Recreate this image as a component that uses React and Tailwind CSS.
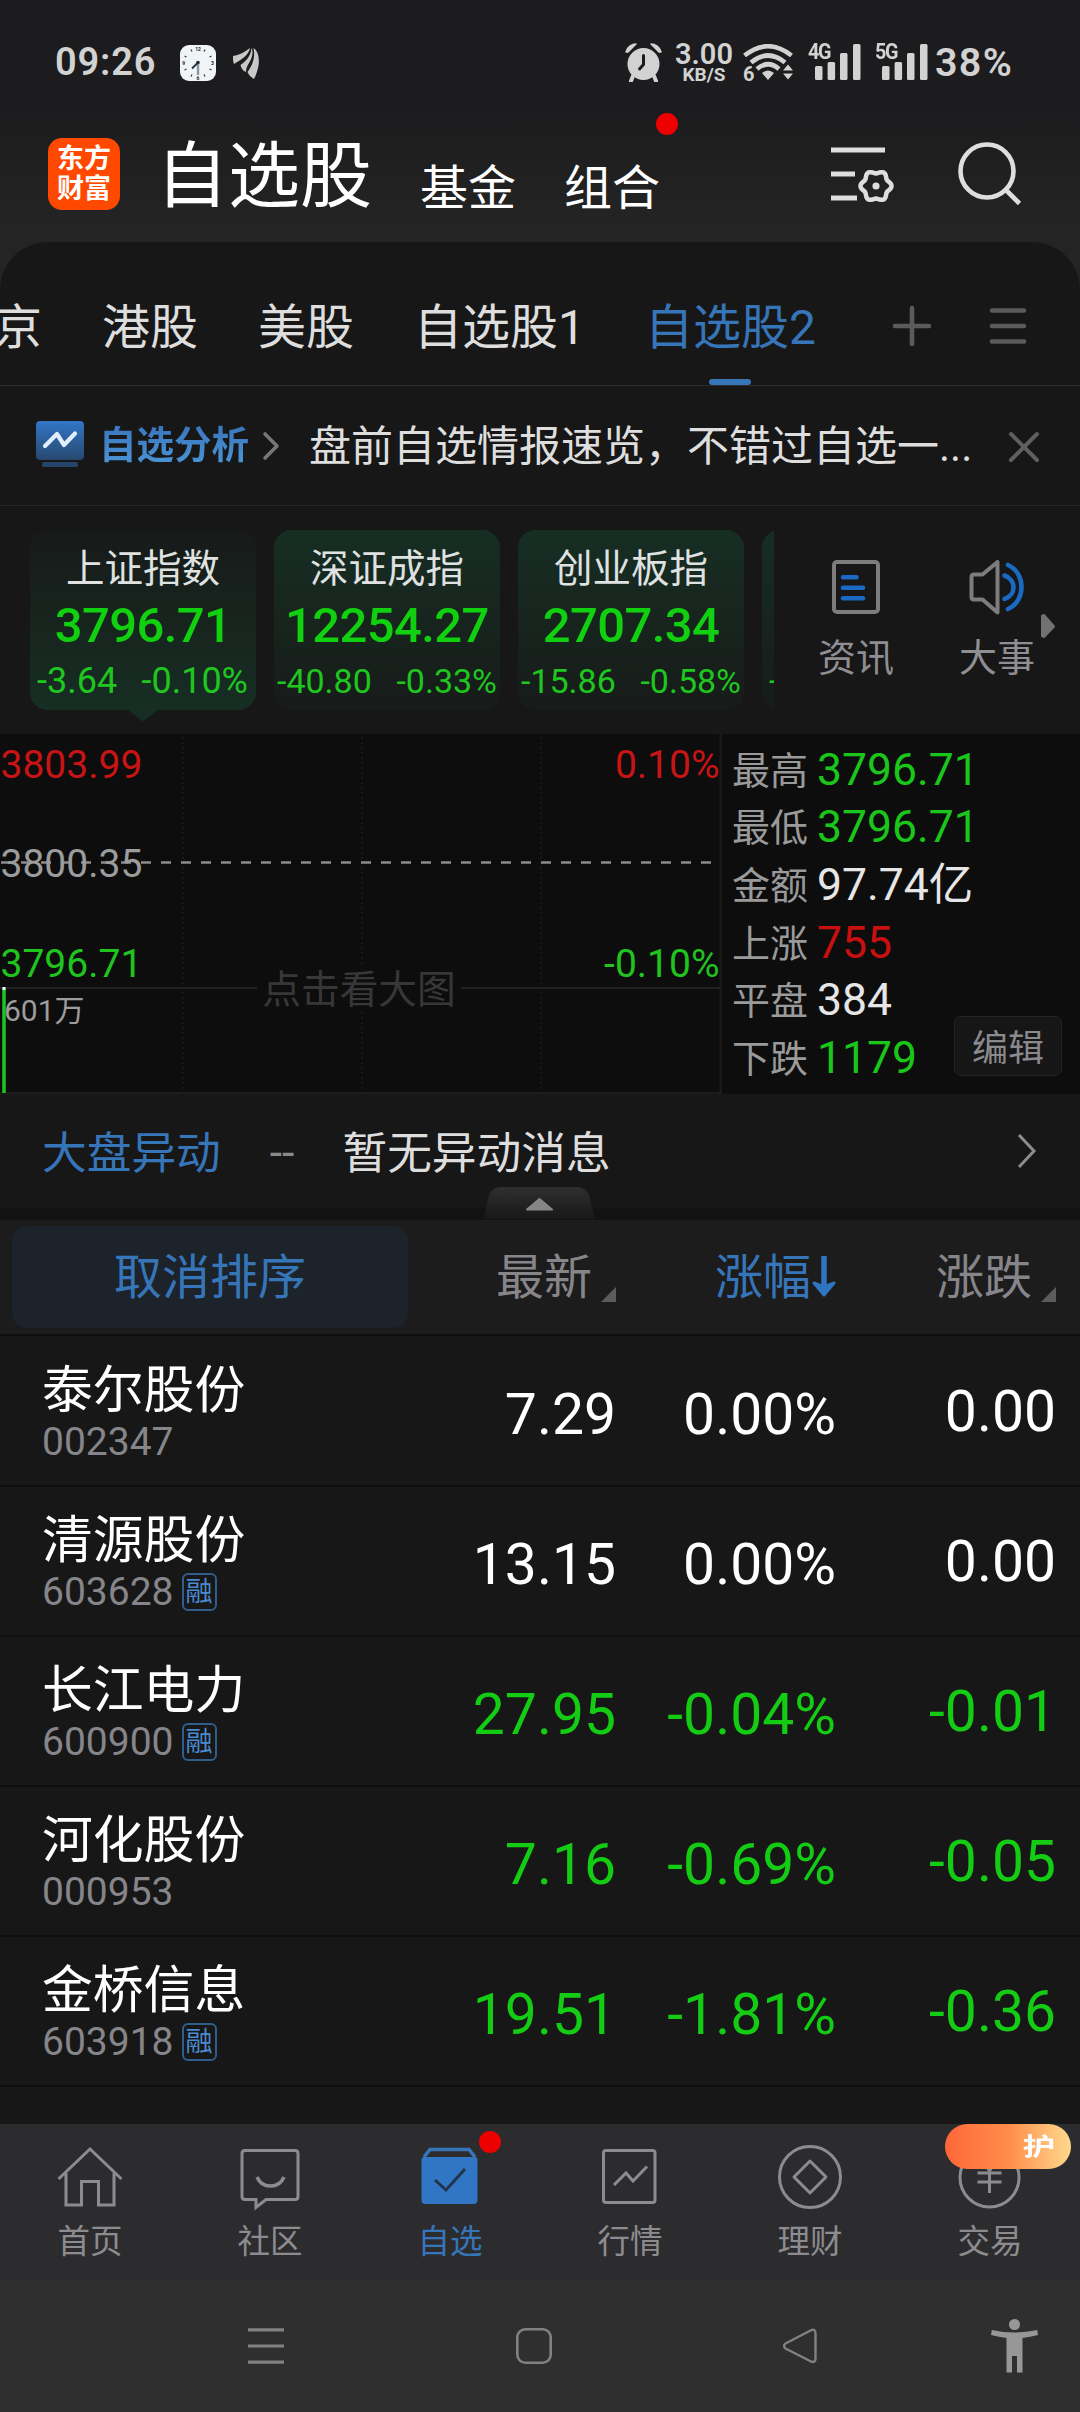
import React, { useState } from 'react';

const tabs = ['京', '港股', '美股', '自选股1', '自选股2'];

const indexes = [
  { name: '上证指数', value: '3796.71', diff: '-3.64', rate: '-0.10%' },
  { name: '深证成指', value: '12254.27', diff: '-40.80', rate: '-0.33%' },
  { name: '创业板指', value: '2707.34', diff: '-15.86', rate: '-0.58%' },
];

const stats = [
  { label: '最高', value: '3796.71', color: 'text-[#1bc61b]' },
  { label: '最低', value: '3796.71', color: 'text-[#1bc61b]' },
  { label: '金额', value: '97.74亿', color: 'text-[#e6e6e6]' },
  { label: '上涨', value: '755', color: 'text-[#c81010]' },
  { label: '平盘', value: '384', color: 'text-[#e6e6e6]' },
  { label: '下跌', value: '1179', color: 'text-[#1bc61b]' },
];

const stocks = [
  { name: '泰尔股份', code: '002347', margin: false, price: '7.29', rate: '0.00%', diff: '0.00' },
  { name: '清源股份', code: '603628', margin: true, price: '13.15', rate: '0.00%', diff: '0.00' },
  { name: '长江电力', code: '600900', margin: true, price: '27.95', rate: '-0.04%', diff: '-0.01' },
  { name: '河化股份', code: '000953', margin: false, price: '7.16', rate: '-0.69%', diff: '-0.05' },
  { name: '金桥信息', code: '603918', margin: true, price: '19.51', rate: '-1.81%', diff: '-0.36' },
];

// Six-lobed gear outline for the settings icon
const gearPoints = Array.from({ length: 72 }, (_, i) => {
  const a = (i * Math.PI) / 36;
  const r = 14 + 1.5 * Math.cos(6 * a);
  return `${(45 + r * Math.cos(a)).toFixed(2)},${(40 + r * Math.sin(a)).toFixed(2)}`;
}).join(' ');

/* --- STATUS BAR --- */
function SignalBars() {
  return (
    <svg className="w-[46px] h-9" viewBox="0 0 46 36" fill="#d2d2d2">
      <rect x="0" y="22" width="7.5" height="14" rx="1.5" />
      <rect x="12.6" y="18" width="7.5" height="18" rx="1.5" />
      <rect x="25" y="9" width="7.5" height="27" rx="1.5" />
      <rect x="38" y="0" width="7.5" height="36" rx="1.5" />
    </svg>
  );
}

function Signal({ label }) {
  return (
    <div className="relative pl-[6px] h-9">
      <span className="absolute -left-px -top-px text-[22px] leading-[18px] font-bold tracking-[-1.5px] scale-x-90 origin-left">{label}</span>
      <SignalBars />
    </div>
  );
}

function StatusBar() {
  return (
    <div className="h-[124px] pt-[44px] pl-[55px] pr-[60px] flex items-start text-[#d2d2d2]">
      <span className="w-[101px] text-[38px] leading-9 font-semibold tracking-[0.8px]">09:26</span>
      <svg className="ml-[24px] mt-px w-9 h-9" viewBox="0 0 36 36">
        <rect width="36" height="36" rx="9" fill="#f1f4f7" />
        <g stroke="#333" strokeWidth="1.2">
          <path d="M11 4.5l1 2M25 4.5l-1 2M4.5 11l2 1M31.5 11l-2 1M4.5 25l2-1M31.5 25l-2-1M11 31.5l1-2M25 31.5l-1-2" />
        </g>
        <g fill="#222" fontSize="5" fontWeight="700" textAnchor="middle">
          <text x="18" y="6">12</text>
          <text x="32.5" y="20">3</text>
          <text x="18" y="35">6</text>
          <text x="3.8" y="20">9</text>
        </g>
        <path d="M18 17.5V30" stroke="#8797a8" strokeWidth="2.4" />
        <path d="M18 17.5l-6 6" stroke="#222f3c" strokeWidth="1.8" />
        <circle cx="18" cy="17.5" r="1.8" fill="#222f3c" />
      </svg>
      <svg className="ml-[17px] mt-1 w-[26px] h-[31px]" viewBox="0 0 26 31" fill="#c8c8c8">
        <path d="M0 8C6 7 12 4 17 0c-1 6-7 11-16 16C0 14 0 11 0 8z" />
        <path d="M18.500 0c2 3 1 10-2.500 15-2 3-3 6-3 9-3-1-5-4-5.500-7C13 13 18 8 18.500 0z" />
        <path d="M20.500 0c6 4 6 14 4.500 20-1 4-2 7-4 11-3-2-5.500-4-6.500-7 5-7 8-15 6-24z" />
      </svg>

      <svg className="ml-auto -mt-px w-[38px] h-[39px]" viewBox="0 0 38 39">
        <circle cx="18.5" cy="21" r="16" fill="#d2d2d2" />
        <path d="M8 33l-2 5M29 33l2 5" stroke="#d2d2d2" strokeWidth="4" strokeLinecap="round" />
        <path d="M1 9C2 4 7 1 11 1L3 9zM36 9C35 4 30 1 26 1l8 8z" fill="#d2d2d2" stroke="#d2d2d2" strokeWidth="1.5" strokeLinejoin="round" />
        <path d="M18.500 12.500v9l-4 4.500" fill="none" stroke="#1c1c1e" strokeWidth="3" strokeLinecap="round" strokeLinejoin="round" />
      </svg>
      <div className="ml-[11px] w-[60px] flex flex-col items-center">
        <span className="text-[29px] leading-[20px] font-semibold">3.00</span>
        <span className="mt-[4px] text-[19px] leading-[14px] font-bold">KB/S</span>
      </div>
      <svg className="ml-[9px] w-[52px] h-[38px]" viewBox="0 0 52 38">
        <g fill="none" stroke="#d2d2d2" strokeWidth="4.6">
          <path d="M1.500 11.500Q25 -7 48.500 11.500" />
          <path d="M8 18.500Q25 4.500 42 18.500" />
          <path d="M14 25Q25 15.500 36 25" />
        </g>
        <path d="M19 29q6-5 12 0l-6 7z" fill="#d2d2d2" />
        <path d="M40 26.500l5-6 5 6zM40 29.500l5 6 5-6z" fill="#d2d2d2" />
        <text x="0" y="36.500" fontSize="20" fontWeight="700" fill="#d2d2d2">6</text>
      </svg>
      <div className="ml-[14px]"><Signal label="4G" /></div>
      <div className="ml-[15px]"><Signal label="5G" /></div>
      <span className="ml-[7px] w-[85px] text-[39.500px] leading-[38px] font-semibold tracking-[1.3px]">38%</span>
    </div>
  );
}

/* --- TOP HEADER --- */
function Header() {
  return (
    <header className="h-[118px] pl-12 flex items-start text-white">
      <div className="mt-[14px] w-[72px] h-[72px] rounded-[14px] bg-[#ff4800] flex flex-col items-center justify-center text-[27px] leading-[30px] font-bold">
        <span>东方</span>
        <span>财富</span>
      </div>
      <h1 className="ml-[36px] mt-[15px] text-[72px] leading-[76px]">自选股</h1>
      <span className="ml-[48px] mt-[40px] text-[48px] leading-[50px]">基金</span>
      <div className="relative ml-[48px] mt-[40px] text-[48px] leading-[50px]">
        组合
        <span className="absolute left-[92px] -top-[51px] w-[22px] h-[22px] rounded-full bg-[#ee0000]" />
      </div>
      <svg className="ml-[171px] mt-[22px] w-[64px] h-[58px]" viewBox="0 0 64 58" fill="none" stroke="#dedede">
        <path d="M0 4h54M0 28h24M0 52h26" strokeWidth="5" />
        <polygon points={gearPoints} strokeWidth="4.500" />
        <circle cx="45" cy="40" r="3.600" fill="#dedede" stroke="none" />
      </svg>
      <svg className="ml-[63px] mt-[17px] w-[64px] h-[66px]" viewBox="0 0 64 66" fill="none" stroke="#dedede" strokeWidth="4.600">
        <circle cx="29" cy="30" r="26.500" />
        <path d="M48 49l13.500 13.500" />
      </svg>
    </header>
  );
}

function GroupTabs({ active, onChange }) {
  return (
    <div className="h-[144px] border-b border-[#2d2d2d] flex items-center overflow-hidden text-[48px] leading-[60px] text-[#dedede]">
      <div className="-ml-[6px] flex gap-[60px] h-full items-center pt-[29px] whitespace-nowrap">
        {tabs.map((tab) => (
          <button
            key={tab}
            onClick={() => onChange(tab)}
            className={tab === active ? 'relative h-full text-[#3775b9]' : 'h-full'}
          >
            {tab}
            {tab === active && <span className="absolute bottom-0 left-[64px] w-[42px] h-[6px] rounded-full bg-[#3775b9]" />}
          </button>
        ))}
      </div>
      <svg className="ml-[76px] mt-[24px] w-[40px] h-[42px] shrink-0" viewBox="0 0 40 42" stroke="#5b5b5b" strokeWidth="4.600" strokeLinecap="round">
        <path d="M3 21h34M20 3v36" />
      </svg>
      <svg className="ml-[57px] mt-[24px] w-[40px] h-[42px] shrink-0" viewBox="0 0 40 42" stroke="#5b5b5b" strokeWidth="4.600" strokeLinecap="round">
        <path d="M3 5.500h32M3 21h32M3 36.500h32" />
      </svg>
    </div>
  );
}

function AnalysisBanner() {
  return (
    <div className="h-[120px] pl-9 border-b border-[#262626] flex items-center">
      <svg className="-mt-[4px] w-12 h-[46px]" viewBox="0 0 48 46">
        <defs>
          <linearGradient id="board" x1="0" y1="0" x2="0" y2="1">
            <stop offset="0" stopColor="#3176c6" />
            <stop offset="1" stopColor="#28486f" />
          </linearGradient>
        </defs>
        <rect width="48" height="39" rx="4" fill="url(#board)" />
        <path d="M9 25l12-12 7 11L39 12.500" fill="none" stroke="#e2eefb" strokeWidth="4.200" strokeLinecap="round" strokeLinejoin="round" />
        <rect x="6" y="41" width="36" height="5" rx="2" fill="#27456b" />
      </svg>
      <span className="ml-[15px] -mt-px text-[37.500px] leading-[44px] font-bold bg-linear-to-b from-[#3a74bd] to-[#4b96d6] bg-clip-text text-transparent">自选分析</span>
      <svg className="ml-[13px] w-[18px] h-[30px]" viewBox="0 0 18 30" fill="none" stroke="#777" strokeWidth="3.600" strokeLinecap="round" strokeLinejoin="round">
        <path d="M3 3l12 12L3 27" />
      </svg>
      <span className="ml-[29px] mt-[3px] text-[42px] leading-[50px] text-[#dedede] whitespace-nowrap">盘前自选情报速览，不错过自选一...</span>
      <svg className="ml-auto mr-[40px] mt-[2px] w-[32px] h-[32px]" viewBox="0 0 32 32" stroke="#5f5f5f" strokeWidth="4" strokeLinecap="round">
        <path d="M3 3l26 26M29 3L3 29" />
      </svg>
    </div>
  );
}

/* --- INDEX CARDS --- */
function IndexCard({ item, active }) {
  return (
    <div
      className={`relative shrink-0 w-[226px] h-[180px] rounded-[18px] flex flex-col items-center 
      ${active ? 'bg-linear-to-b from-[#171a19] to-[#162e23]' : 'bg-linear-to-b from-[#162e23] to-[#171b19]'}`}
    >
      <p className="mt-[15px] text-[38.5px] leading-[48px] text-[#dfe2e0]">{item.name}</p>
      <p className="mt-[3px] text-[49px] leading-[60px] font-medium tracking-[-0.6px] text-[#10d010]">{item.value}</p>
      <p className={`w-full flex justify-between leading-[42px] text-[#1fc61f] ${active ? 'mt-[4px] pl-[7px] pr-[8px] text-[36px]' : 'mt-[4px] px-[3px] text-[34px]'}`}>
        <span>{item.diff}</span>
        <span>{item.rate}</span>
      </p>
      {active && (
        <svg className="absolute left-[98px] top-[180px] w-[30px] h-[12px]" viewBox="0 0 30 12">
          <path d="M0 0h30L15 11.500z" fill="#162e23" />
        </svg>
      )}
    </div>
  );
}

function IndexStrip() {
  return (
    <div className="h-[228px] flex text-[#8e8e93]">
      <div className="w-[774px] pl-[30px] pt-[24px] flex gap-[18px] overflow-hidden">
        {indexes.map((item, i) => (
          <IndexCard key={item.name} item={item} active={i === 0} />
        ))}
        <div className="shrink-0 w-[226px] h-[180px] rounded-[18px] bg-linear-to-b from-[#162e23] to-[#171b19] flex items-end pl-[7px] pb-[9px] text-[34px] leading-[42px] text-[#1fc61f]">-</div>
      </div>
      <div className="w-[164px] flex flex-col items-center pt-[54px]">
        <svg className="w-12 h-[54px]" viewBox="0 0 48 54" fill="none" strokeLinecap="round">
          <rect x="2" y="2" width="44" height="50" rx="3" stroke="#7d7d7d" strokeWidth="4" />
          <path d="M11 17.300h13.500M11 27.800h20M11 38.300h20" stroke="#1a6ac4" strokeWidth="4.600" />
        </svg>
        <span className="mt-[20px] text-[38px] leading-[48px]">资讯</span>
      </div>
      <div className="relative w-[118px] flex flex-col items-center pt-[54px]">
        <svg className="w-[56px] h-[56px]" viewBox="0 0 56 56" fill="none" strokeLinecap="round" strokeLinejoin="round">
          <path d="M2.500 17q0-2.500 2.500-2.500h8.500L28.500 2v50.500L13.500 39.500H5q-2.500 0-2.500-2.500z" stroke="#7d7d7d" strokeWidth="4" />
          <path d="M35.500 15.500c12 4 12 19.500 0 23.500" stroke="#1a6ac4" strokeWidth="4.600" />
          <path d="M39 5c18 8 18 36 0 44" stroke="#1a6ac4" strokeWidth="4.600" />
        </svg>
        <span className="mt-[18px] text-[38px] leading-[48px]">大事</span>
        <svg className="absolute left-[102px] top-[108px] w-[16px] h-[25px]" viewBox="0 0 16 25">
          <path d="M2 2v20l2 1L14 12.500 4 1z" fill="#727272" stroke="#727272" strokeWidth="2" strokeLinejoin="round" />
        </svg>
      </div>
    </div>
  );
}

/* --- MINUTE CHART + MARKET STATS --- */
function MinuteChart() {
  return (
    <svg className="w-[722px] h-[360px] shrink-0" viewBox="0 0 722 360" fontSize="39">
      <path d="M183 3v354M362 3v354M541 3v354" stroke="#181818" strokeWidth="2" strokeDasharray="2 3" />
      <path d="M0 254h720" stroke="#222" strokeWidth="2" />
      <path d="M0 359h722M720.500 0v360" stroke="#1c1c1c" strokeWidth="2" />
      <path d="M1 128.500h712" stroke="#8c8c8c" strokeWidth="2.500" strokeDasharray="10 10" />
      <rect x="257" y="232" width="204" height="46" fill="#0d0d0d" />
      <text x="359" y="269" fontSize="38.700" textAnchor="middle" fill="#373737">点击看大图</text>
      <text x="0.500" y="44" fill="#c81414">3803.99</text>
      <text x="0.500" y="143" fill="#9c9c9c">3800.35</text>
      <text x="0.500" y="243" fill="#1fc41f">3796.71</text>
      <text x="719.500" y="44" textAnchor="end" fill="#c81414">0.10%</text>
      <text x="719.500" y="243" textAnchor="end" fill="#1fc41f">-0.10%</text>
      <text x="4" y="287" fontSize="30" fill="#9c9c9c">601万</text>
      <path d="M4 254v105" stroke="#1fc41f" strokeWidth="3.500" />
      <path d="M4 253v3" stroke="#fff" strokeWidth="3" />
    </svg>
  );
}

function MarketPanel() {
  return (
    <div className="h-[360px] bg-[#0d0d0d] flex">
      <MinuteChart />
      <div className="relative flex-1 pl-[10px] pt-[7px]">
        {stats.map((s) => (
          <div key={s.label} className="h-[57.600px] flex items-center">
            <span className="w-[85px] pt-[2px] text-[38px] leading-[48px] text-[#9a9a9a]">{s.label}</span>
            <span className={`text-[44.500px] leading-[48px] ${s.color}`}>{s.value}</span>
          </div>
        ))}
        <button className="absolute left-[232px] top-[282px] w-[108px] h-[60px] pt-[5px] rounded-[7px] border border-[#242424] bg-[#161616] text-[36px] leading-[48px] text-[#8a8a8e]">编辑</button>
      </div>
    </div>
  );
}

function MarketNews() {
  return (
    <div className="relative h-[126px] border-b-[12px] border-[#121212] pl-[42px] pr-[42px] flex items-center text-[44.700px] leading-[56px]">
      <span className="pt-[5px] text-[#3775b9]">大盘异动</span>
      <span className="ml-[49px] pt-[4px] text-[#8a8a8e]">--</span>
      <span className="ml-[48px] pt-[5px] text-[#dedede]">暂无异动消息</span>
      <svg className="ml-auto w-[22px] h-[36px]" viewBox="0 0 22 36" fill="none" stroke="#8c8c8c" strokeWidth="3">
        <path d="M3 2l15 16L3 34" />
      </svg>
      {/* Collapse handle */}
      <svg className="absolute left-[484px] top-[93px] w-[112px] h-[32px]" viewBox="0 0 112 32">
        <defs>
          <linearGradient id="handle" x1="0" y1="0" x2="0" y2="1">
            <stop offset="0" stopColor="#2f2f2f" />
            <stop offset="1" stopColor="#181818" />
          </linearGradient>
        </defs>
        <path d="M0 32L4 12Q6 0 18 0h74q12 0 14 12l5 20z" fill="url(#handle)" />
        <path d="M43 22.500L55.500 12 68 22.500z" fill="#868686" stroke="#868686" strokeWidth="2" strokeLinejoin="round" />
      </svg>
    </div>
  );
}

/* --- STOCK TABLE --- */
function SortCorner() {
  return (
    <svg className="mt-[39px] w-[15px] h-[15px]" viewBox="0 0 15 15">
      <path d="M15 0v15H0z" fill="#5c5c5f" />
    </svg>
  );
}

function TableHead() {
  return (
    <div className="h-[116px] border-b-2 border-[#0e0e0e] bg-[#1c1c1c] pl-3 pr-6 flex items-center text-[48px] leading-[60px] text-[#85858a]">
      <button className="w-[396px] h-[102px] pt-[2px] rounded-[15px] bg-[#1c232b] text-[#3775b9]">取消排序</button>
      <div className="w-[208px] pt-[2px] flex justify-end">
        <span className="mr-[9px]">最新</span>
        <SortCorner />
      </div>
      <div className="w-[220px] pt-[2px] flex justify-end items-center text-[#3775b9]">
        <span>涨幅</span>
        <svg className="-ml-px -mt-[2px] w-[26px] h-[44px]" viewBox="0 0 26 44">
          <path d="M14 1v30" stroke="#2f74c0" strokeWidth="5.500" />
          <path d="M4 28l10 12 10-12-10 4z" fill="#2f74c0" stroke="#2f74c0" strokeWidth="3" strokeLinejoin="round" />
        </svg>
      </div>
      <div className="w-[220px] pt-[2px] flex justify-end">
        <span className="mr-[9px]">涨跌</span>
        <SortCorner />
      </div>
    </div>
  );
}

function StockRow({ stock }) {
  const color = stock.rate.startsWith('-') ? 'text-[#13cc13]' : 'text-white';
  return (
    <div className="h-[150px] border-b-2 border-[#0e0e0e] pl-[42px] pr-6 flex">
      <div className="w-[366px] pt-[23px]">
        <p className="text-[50.800px] leading-[62px] text-white">{stock.name}</p>
        <div className="-mt-px flex items-center h-[42px]">
          <span className="text-[39px] leading-[42px] text-[#85858a]">{stock.code}</span>
          {stock.margin && (
            <span className="ml-[8px] w-[35px] h-[38px] rounded-[6px] border-2 border-[#315d8c] flex items-center justify-center text-[27px] leading-[30px] text-[#4a8ad0]">融</span>
          )}
        </div>
      </div>
      <div className={`flex text-right text-[57px] leading-[68px] pt-[44px] ${color}`}>
        <span className="w-[208px]">{stock.price}</span>
        <span className="w-[220px]">{stock.rate}</span>
        <span className="w-[220px] -mt-[3px]">{stock.diff}</span>
      </div>
    </div>
  );
}

/* --- BOTTOM TAB BAR --- */
const navItems = [
  {
    label: '首页',
    icon: <path d="M1.500 33L33 3l31.500 30M9 27v32h15.500V35.500h17V59H57V27" />,
  },
  {
    label: '社区',
    icon: (
      <>
        <path d="M8 4.500h50q3 0 3 3v43q0 3-3 3H29l-10 8v-8H8q-3 0-3-3v-43q0-3 3-3z" />
        <path d="M20 31c5 12 22 12 27 0" strokeWidth="3.500" />
      </>
    ),
  },
  {
    label: '自选',
    dot: true,
    icon: (
      <>
        <path d="M7 11l6-7.500h39l6 7.500" strokeWidth="3.500" />
        <path d="M4.500 14q0-3 3-3h50q3 0 3 3v40q0 4-4 4h-48q-4 0-4-4z" fill="#3175c5" stroke="none" />
        <path d="M18 34l11 10 19-21" stroke="#20344c" />
      </>
    ),
  },
  {
    label: '行情',
    icon: (
      <>
        <rect x="6.500" y="4.500" width="51.500" height="52" rx="2.500" />
        <path d="M17 39l12-12 7 8 14-14.500" />
      </>
    ),
  },
  {
    label: '理财',
    icon: (
      <>
        <circle cx="33" cy="31" r="30.500" />
        <path d="M33 15L49 31 33 47 17 31z" strokeLinejoin="round" />
      </>
    ),
  },
  {
    label: '交易',
    badge: '护',
    icon: (
      <>
        <circle cx="32.500" cy="31.500" r="29.500" />
        <path d="M24 12l8.500 13L41 12M20.500 27h24M20.500 36h24M32.500 25v22" />
      </>
    ),
  },
];

function BottomNav() {
  return (
    <nav className="relative z-10 h-[156px] bg-[#2c2c2e] flex">
      {navItems.map((item) => (
        <div key={item.label} className={`relative w-[180px] flex flex-col items-center pt-[20px] ${item.dot ? 'text-[#3775b9]' : 'text-[#8c8c90]'}`}>
          <svg className="w-[66px] h-[66px] overflow-visible" viewBox="0 -2 66 66" fill="none" stroke="currentColor" strokeWidth="3">
            {item.icon}
          </svg>
          <span className="mt-[12px] text-[32.500px] leading-[40px]">{item.label}</span>
          {item.dot && <span className="absolute left-[119px] top-[7px] w-[22px] h-[22px] rounded-full bg-[#ee0000]" />}
          {item.badge && (
            <span className="absolute left-[45px] top-0 w-[126px] h-[45px] rounded-full bg-linear-to-r from-[#ff6639] via-[#ff8c4a] to-[#ffd98c] text-white text-[26px] leading-[46px] font-bold text-right pr-[19px]">
              <span className="inline-block scale-x-125 scale-y-90">{item.badge}</span>
            </span>
          )}
        </div>
      ))}
    </nav>
  );
}

function SystemNav() {
  return (
    <div className="h-[132px] bg-[#2f2f2f] flex items-center pl-[248px]">
      <svg className="w-9 h-9" viewBox="0 0 36 36" stroke="#818181" strokeWidth="3.200">
        <path d="M0 1.800h36M0 18h36M0 34.200h36" />
      </svg>
      <svg className="ml-[232px] w-9 h-9" viewBox="0 0 36 36" fill="none" stroke="#818181" strokeWidth="2.600">
        <rect x="1.300" y="1.300" width="33.400" height="33.400" rx="8" />
      </svg>
      <svg className="ml-[230px] w-[36px] h-9" viewBox="0 0 36 36" fill="none" stroke="#818181" strokeWidth="2.400" strokeLinejoin="round">
        <path d="M29 2.200L3.500 15.500q-3 2.500 0 5L29 33.500q4.500 1.500 4.500-3v-25q0-5-4.500-3.300z" />
      </svg>
      <svg className="ml-[173px] w-[48px] h-[54px]" viewBox="0 0 48 54" fill="#979797">
        <circle cx="23.500" cy="5.500" r="5.500" />
        <path d="M.800 11q22.700 5 45.400 0l.800 5q-8 2-15.500 3v34.500h-5.500V37h-5v16.500h-5.500V19Q8 18 0 16z" />
      </svg>
    </div>
  );
}

export default function App() {
  const [activeTab, setActiveTab] = useState('自选股2');

  return (
    <div className="w-[1080px] h-[2412px] overflow-hidden flex flex-col bg-[#171717] font-[Roboto,'Noto_Sans_CJK_SC',sans-serif]">
      <div className="bg-linear-to-b from-[#1c1c1e] from-[110px] to-[#252525] to-[242px]">
        <StatusBar />
        <Header />
      </div>
      <div className="bg-[#242424]">
        <div className="rounded-t-[48px] bg-[#171717]">
          <GroupTabs active={activeTab} onChange={setActiveTab} />
        </div>
      </div>
      <AnalysisBanner />
      <IndexStrip />
      <MarketPanel />
      <MarketNews />
      <TableHead />
      <div className="h-[788px] pt-px">
        {stocks.map((stock) => (
          <StockRow key={stock.code} stock={stock} />
        ))}
      </div>
      <BottomNav />
      <SystemNav />
    </div>
  );
}
